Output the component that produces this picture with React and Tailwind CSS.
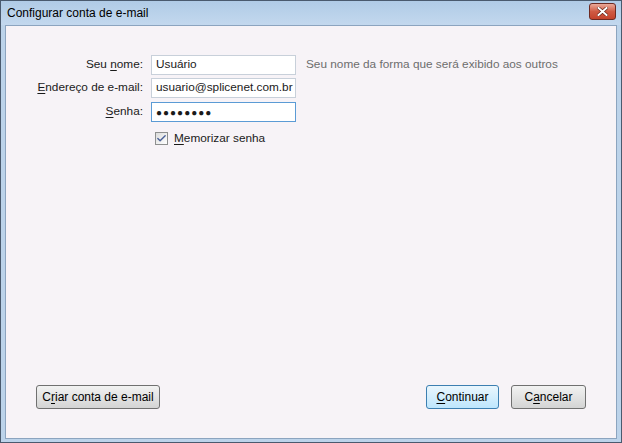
import { Check } from 'lucide-react'

function U({ children }) {
  return <span className="underline underline-offset-2">{children}</span>
}

function Field({ label, value, focused, password }) {
  return (
    <div className="flex items-center h-[20px]">
      <div className="w-[140px] pr-[8px] text-right">{label}</div>
      <div
        className={`w-[145px] h-[20px] flex items-center px-[4px] bg-white border ${
          focused ? 'border-[#5b9bd5]' : 'border-[#c8d0da]'
        } ${password ? 'text-[10px] tracking-[1px]' : ''}`}
      >
        {value}
      </div>
    </div>
  )
}

function Button({ children, primary, className }) {
  return (
    <button
      className={`h-[24px] rounded-[3px] border text-[12px] text-black ${
        primary
          ? 'border-[#3c7fb1] bg-gradient-to-b from-[#eaf6fd] to-[#bee6fd]'
          : 'border-[#707070] bg-gradient-to-b from-[#f2f2f2] to-[#d4d4d4]'
      } ${className}`}
    >
      {children}
    </button>
  )
}

export default function App() {
  return (
    <div
      className="w-[622px] h-[443px] flex flex-col bg-[#bcd3ea] border border-[#4a5a6e] text-[11.8px] text-[#1a1a1a]"
      style={{ fontFamily: '"Liberation Sans", Arial, sans-serif' }}
    >
      {/* title bar */}
      <div className="h-[24px] flex items-center justify-between pl-[6px] pr-[5px] bg-gradient-to-b from-[#b0cbe6] to-[#c3d8ee]">
        <span className="text-[12px] text-black">Configurar conta de e-mail</span>
        <div className="w-[27px] h-[17px] mt-[-3px] rounded-[3px] border border-[#6d2a22] bg-gradient-to-b from-[#e9a99a] via-[#cf5a43] to-[#c4422b] flex items-center justify-center">
          <svg width="11" height="9" viewBox="0 0 11 9">
            <path d="M1.5 1 L9.5 8 M9.5 1 L1.5 8" stroke="#5a1a10" strokeWidth="3.2" strokeLinecap="square" />
            <path d="M1.5 1 L9.5 8 M9.5 1 L1.5 8" stroke="#fff" strokeWidth="2" strokeLinecap="square" />
          </svg>
        </div>
      </div>

      {/* body */}
      <div className="flex-1 flex px-[4px] pb-[3px]">
        <div className="flex-1 flex flex-col bg-[#f7f3f7] border border-[#8ca4bf] pt-[29px] pl-[5px] pr-[30px] pb-[29px]">
          <div className="flex flex-col gap-[3px]">
            <div className="flex items-center">
              <Field label={<>Seu <U>n</U>ome:</>} value="Usuário" />
              <span className="ml-[10px] text-[#6d6d6d]">Seu nome da forma que será exibido aos outros</span>
            </div>
            <Field label={<><U>E</U>ndereço de e-mail:</>} value="usuario@splicenet.com.br" />
            <div className="mt-[1px]">
              <Field label={<><U>S</U>enha:</>} value="●●●●●●●●" focused password />
            </div>
          </div>
          <div className="flex items-center mt-[8px] ml-[144px]">
            <div className="w-[13px] h-[13px] border border-[#8e8f8f] bg-gradient-to-br from-[#dcdcdc] to-[#ffffff] flex items-center justify-center">
              <Check size={11} strokeWidth={3} className="text-[#4a5f97]" />
            </div>
            <span className="ml-[6px]"><U>M</U>emorizar senha</span>
          </div>

          <div className="flex-1" />

          <div className="flex items-center pl-[25px]">
            <Button className="w-[124px]">C<U>r</U>iar conta de e-mail</Button>
            <div className="flex-1" />
            <Button primary className="w-[73px]"><U>C</U>ontinuar</Button>
            <Button className="w-[75px] ml-[12px]">C<U>a</U>ncelar</Button>
          </div>
        </div>
      </div>
    </div>
  )
}
